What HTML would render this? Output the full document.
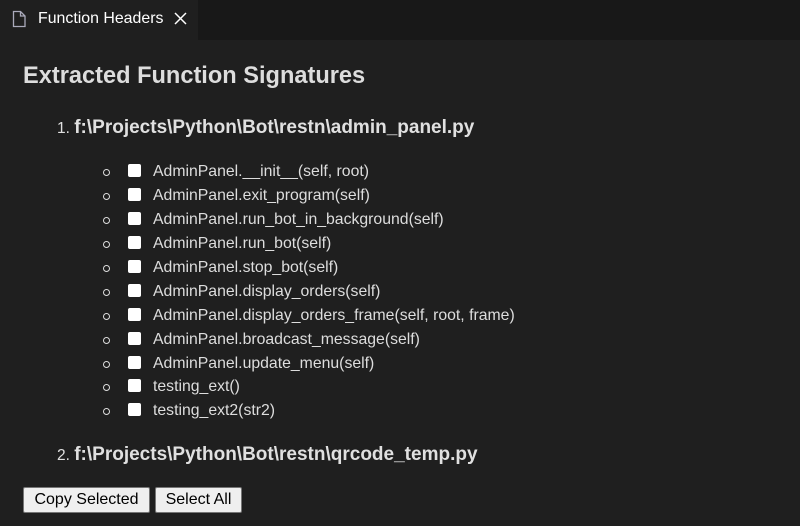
<html><head><style>
body{margin:0;width:800px;height:526px;background:#1f1f1f;font-family:"Liberation Sans",sans-serif;color:#ccc;overflow:hidden;position:relative}
.bar{position:absolute;left:0;top:0;width:800px;height:40px;background:#181818}
.tab{position:absolute;left:0;top:0;width:198px;height:41px;background:#1f1f1f;color:#fff;font-size:15.9px}
.abs{position:absolute;white-space:nowrap}
h1{position:absolute;left:23px;top:63px;margin:0;font-size:23.6px;font-weight:bold;color:#ddd;white-space:nowrap}
.h2{position:absolute;font-size:19px;font-weight:bold;color:#e0e0e0}
.h2 span{font-weight:normal;font-size:15.5px}
.item{position:absolute;left:0;height:24px;font-size:15.8px;color:#ddd;white-space:nowrap;width:800px}
.bul{position:absolute;left:103px;top:5px;width:5px;height:5px;border:1px solid #ddd;border-radius:50%}
.cb{position:absolute;left:128px;top:0px;width:13px;height:13px;background:#fff;border-radius:2px}
.txt{position:absolute;left:153px;top:-1px;white-space:nowrap}
button{position:absolute;top:487px;height:26px;background:#efefef;border:1px solid #767676;border-radius:2px;font-family:"Liberation Sans",sans-serif;font-size:16px;color:#000;padding:0}
</style></head><body>
<div class="bar"></div>
<div class="tab">
<svg class="abs" style="left:12px;top:10px" width="15" height="18" viewBox="0 0 15 18"><path d="M1.5 1.5h7l4.5 4.5v10.5h-11.5z M8.5 1.5v4.5h4.5" fill="none" stroke="#aab" stroke-width="1.3"/></svg>
<div class="abs" style="left:38px;top:10px">Function Headers</div>
<svg class="abs" style="left:174px;top:12px" width="13" height="13"><path d="M1 1L12 12M12 1L1 12" stroke="#fff" stroke-width="1.5"/></svg>
</div>
<h1>Extracted Function Signatures</h1>
<div class="h2 abs" style="left:57px;top:117px"><span>1. </span>f:\Projects\Python\Bot\restn\admin_panel.py</div>
<div class="item" style="top:164px"><div class="bul"></div><div class="cb"></div><div class="txt">AdminPanel.__init__(self, root)</div></div>
<div class="item" style="top:188px"><div class="bul"></div><div class="cb"></div><div class="txt">AdminPanel.exit_program(self)</div></div>
<div class="item" style="top:212px"><div class="bul"></div><div class="cb"></div><div class="txt">AdminPanel.run_bot_in_background(self)</div></div>
<div class="item" style="top:236px"><div class="bul"></div><div class="cb"></div><div class="txt">AdminPanel.run_bot(self)</div></div>
<div class="item" style="top:260px"><div class="bul"></div><div class="cb"></div><div class="txt">AdminPanel.stop_bot(self)</div></div>
<div class="item" style="top:284px"><div class="bul"></div><div class="cb"></div><div class="txt">AdminPanel.display_orders(self)</div></div>
<div class="item" style="top:308px"><div class="bul"></div><div class="cb"></div><div class="txt">AdminPanel.display_orders_frame(self, root, frame)</div></div>
<div class="item" style="top:332px"><div class="bul"></div><div class="cb"></div><div class="txt">AdminPanel.broadcast_message(self)</div></div>
<div class="item" style="top:356px"><div class="bul"></div><div class="cb"></div><div class="txt">AdminPanel.update_menu(self)</div></div>
<div class="item" style="top:379px"><div class="bul"></div><div class="cb"></div><div class="txt">testing_ext()</div></div>
<div class="item" style="top:403px"><div class="bul"></div><div class="cb"></div><div class="txt">testing_ext2(str2)</div></div>
<div class="h2 abs" style="left:57px;top:444px"><span>2. </span>f:\Projects\Python\Bot\restn\qrcode_temp.py</div>
<button style="left:23px;width:127px">Copy Selected</button>
<button style="left:155px;width:87px">Select All</button>
</body></html>
